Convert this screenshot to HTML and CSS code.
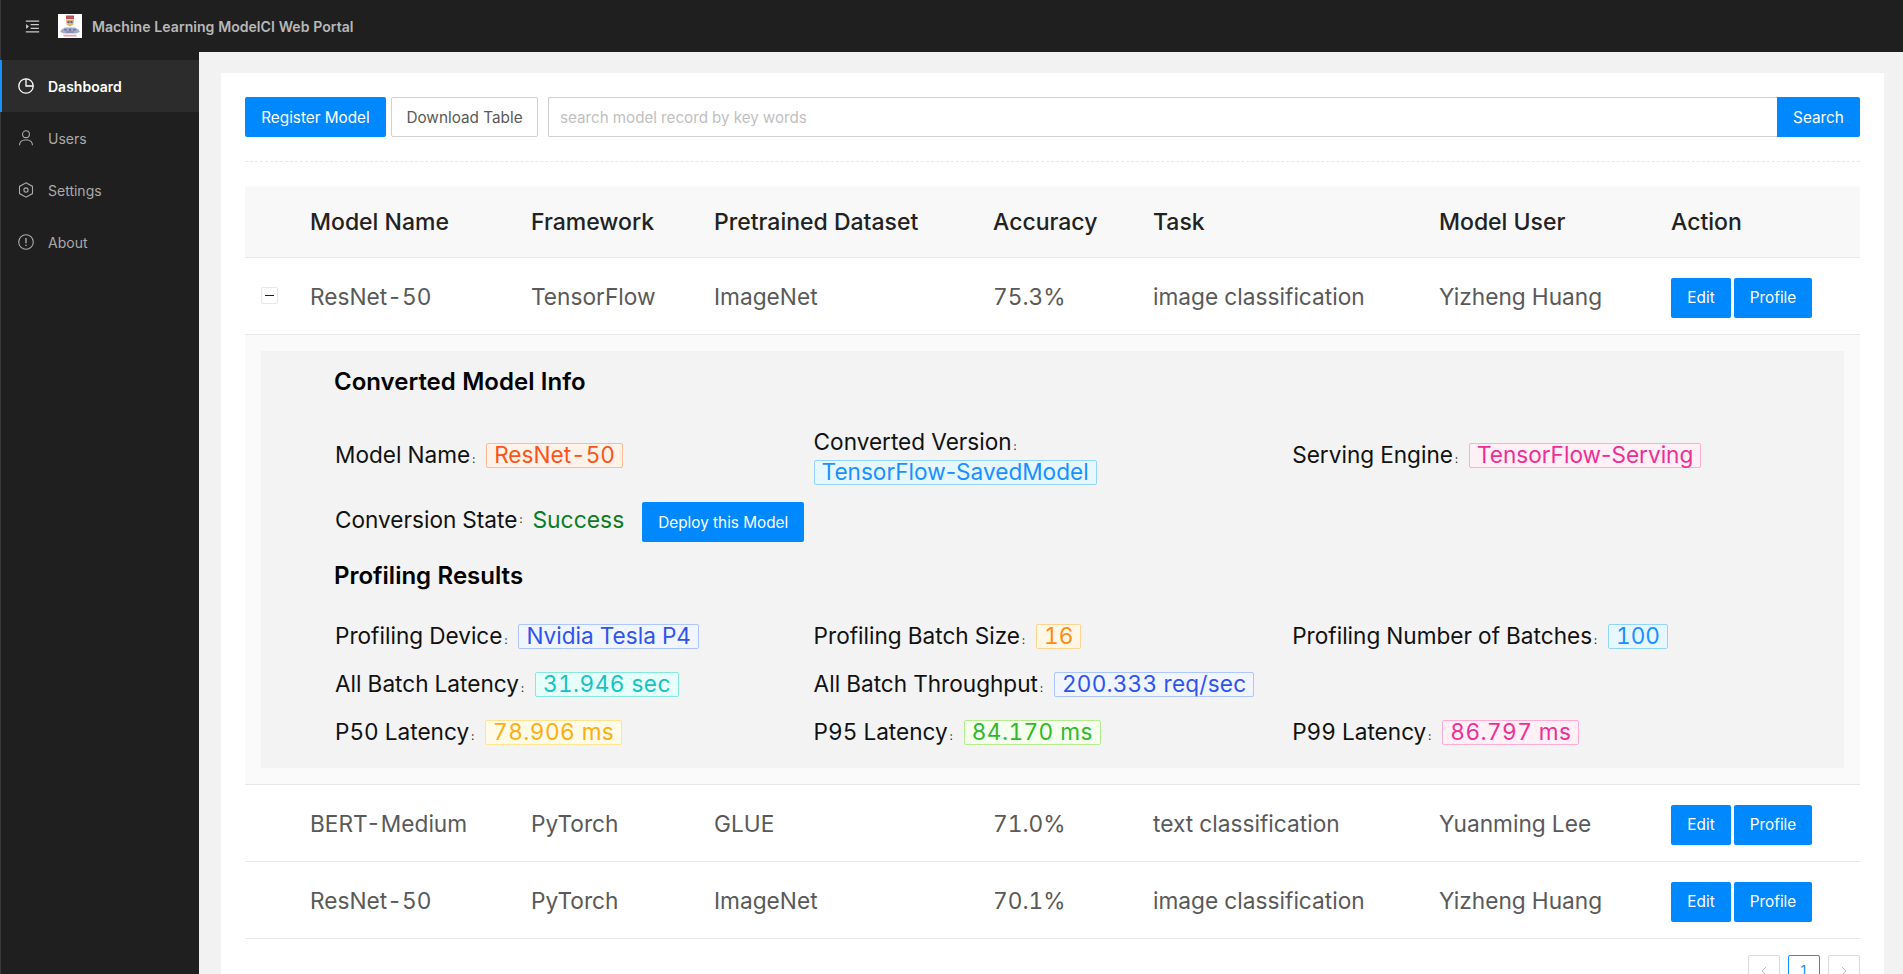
FILE: index.html
```html
<!DOCTYPE html>
<html lang="en">
<head>
<meta charset="utf-8">
<title>Machine Learning ModelCI Web Portal</title>
<link rel="stylesheet" href="styles.css">
</head>
<body>
<header class="topbar">
  <svg class="fold-icon" viewBox="64 64 896 896" fill="currentColor"><path d="M408 442h480c4.4 0 8-3.6 8-8v-56c0-4.4-3.6-8-8-8H408c-4.4 0-8 3.6-8 8v56c0 4.4 3.6 8 8 8zm-8 204c0 4.4 3.6 8 8 8h480c4.4 0 8-3.6 8-8v-56c0-4.4-3.6-8-8-8H408c-4.4 0-8 3.6-8 8v56zm504-486H120c-4.4 0-8 3.6-8 8v56c0 4.4 3.6 8 8 8h784c4.4 0 8-3.6 8-8v-56c0-4.4-3.6-8-8-8zm0 632H120c-4.4 0-8 3.6-8 8v56c0 4.4 3.6 8 8 8h784c4.4 0 8-3.6 8-8v-56c0-4.4-3.6-8-8-8zM142.4 642.1L298.7 519a8.84 8.84 0 0 0 0-13.9L142.4 381.9c-5.8-4.6-14.4-.5-14.4 6.9v246.3a8.9 8.9 0 0 0 14.4 7z"/></svg>
  <svg class="logo" viewBox="0 0 24 24">
    <rect width="24" height="24" fill="#fff"/>
    <rect x="8" y="1.5" width="8" height="3.5" fill="#c2505c"/>
    <path d="M8 5.5h8l-.5 5-3.5 2-3.5-2z" fill="#d9b878"/>
    <path d="M9.5 7h2v2h-2zM12.5 7h2v2h-2z" fill="#5a5f8a"/>
    <path d="M3 16l4-2.5h10l4 2.5 .8 2-3.8 1.5H6L2.2 18z" fill="#a3aaca"/>
    <path d="M6 15h3v1.5H6zM11 14.5h2V17h-2zM15 15h3v1.5h-3zM8 17.5h8v1H8z" fill="#6d76a6"/>
    <rect x="5.5" y="20.8" width="13" height="1.7" fill="#ec9aa8"/>
  </svg>
  <span class="app-title">Machine Learning ModelCI Web Portal</span>
</header>
<div class="shell">
  <nav class="sidebar">
    <a class="nav-item active">
      <svg class="nav-icon" viewBox="0 0 16 16" fill="none" stroke="currentColor" stroke-width="1.3"><circle cx="8" cy="8" r="7.2"/><path d="M8 .8V8h7.2"/></svg>
      <span>Dashboard</span>
    </a>
    <a class="nav-item">
      <svg class="nav-icon" viewBox="0 0 16 16" fill="none" stroke="currentColor" stroke-width="1.1"><circle cx="8" cy="4.2" r="3.4"/><path d="M1.5 15.2c0-3.2 2.5-5.2 5-5.2h3c2.5 0 5 2 5 5.2"/></svg>
      <span>Users</span>
    </a>
    <a class="nav-item">
      <svg class="nav-icon" viewBox="0 0 16 16" fill="none" stroke="currentColor" stroke-width="1.1"><path d="M8 .8l6.5 3.6v7.2L8 15.2l-6.5-3.6V4.4z"/><circle cx="8" cy="8" r="2.1"/></svg>
      <span>Settings</span>
    </a>
    <a class="nav-item">
      <svg class="nav-icon" viewBox="0 0 16 16" fill="none" stroke="currentColor" stroke-width="1.1"><circle cx="8" cy="8" r="7.3"/><path d="M8 4v5.2" stroke-width="1.4"/><path d="M8 10.8v1.3" stroke-width="1.4"/></svg>
      <span>About</span>
    </a>
  </nav>
  <main class="content">
    <section class="card">
      <div class="toolbar">
        <button class="btn primary register">Register Model</button>
        <button class="btn default download">Download Table</button>
        <div class="search">
          <input class="search-input" type="text" placeholder="search model record by key words">
          <button class="btn primary search-btn">Search</button>
        </div>
      </div>
      <div class="dashed"></div>
      <table class="models">
        <colgroup>
          <col class="c-exp"><col class="c-name"><col class="c-fw"><col class="c-ds"><col class="c-acc"><col class="c-task"><col class="c-user"><col class="c-act">
        </colgroup>
        <thead>
          <tr><th></th><th>Model Name</th><th>Framework</th><th>Pretrained Dataset</th><th>Accuracy</th><th>Task</th><th>Model User</th><th>Action</th></tr>
        </thead>
        <tbody>
          <tr>
            <td class="exp-cell"><span class="expander"></span></td>
            <td>ResNet-50</td><td>TensorFlow</td><td>ImageNet</td><td>75.3%</td><td>image classification</td><td>Yizheng Huang</td>
            <td class="actions"><button class="btn primary edit">Edit</button><button class="btn primary profile">Profile</button></td>
          </tr>
          <tr class="expanded">
            <td colspan="8">
              <div class="panel">
                <h3 class="panel-title">Converted Model Info</h3>
                <div class="desc desc-top">
                  <div class="item lift"><span class="label">Model Name</span><i class="colon">:</i><span class="tag volcano">ResNet-50</span></div>
                  <div class="item"><span class="label">Converted Version</span><i class="colon">:</i><br><span class="tag blue prop">TensorFlow-SavedModel</span></div>
                  <div class="item lift"><span class="label">Serving Engine</span><i class="colon">:</i><span class="tag magenta prop">TensorFlow-Serving</span></div>
                </div>
                <div class="state">
                  <span class="label">Conversion State</span><i class="colon">:</i><span class="success">Success</span>
                  <button class="btn primary deploy">Deploy this Model</button>
                </div>
                <h3 class="panel-title second">Profiling Results</h3>
                <div class="desc desc-results">
                  <div class="item"><span class="label">Profiling Device</span><i class="colon">:</i><span class="tag geekblue">Nvidia Tesla P4</span></div>
                  <div class="item"><span class="label">Profiling Batch Size</span><i class="colon">:</i><span class="tag orange">16</span></div>
                  <div class="item"><span class="label">Profiling Number of Batches</span><i class="colon">:</i><span class="tag blue">100</span></div>
                  <div class="item"><span class="label">All Batch Latency</span><i class="colon">:</i><span class="tag cyan unit">31.946 sec</span></div>
                  <div class="item"><span class="label">All Batch Throughput</span><i class="colon">:</i><span class="tag geekblue unit-long">200.333 req/sec</span></div>
                  <div class="item"></div>
                  <div class="item"><span class="label">P50 Latency</span><i class="colon">:</i><span class="tag gold unit">78.906 ms</span></div>
                  <div class="item"><span class="label">P95 Latency</span><i class="colon">:</i><span class="tag green unit">84.170 ms</span></div>
                  <div class="item"><span class="label">P99 Latency</span><i class="colon">:</i><span class="tag magenta unit">86.797 ms</span></div>
                </div>
              </div>
            </td>
          </tr>
          <tr>
            <td></td><td>BERT-Medium</td><td>PyTorch</td><td>GLUE</td><td>71.0%</td><td>text classification</td><td>Yuanming Lee</td>
            <td class="actions"><button class="btn primary edit">Edit</button><button class="btn primary profile">Profile</button></td>
          </tr>
          <tr>
            <td></td><td>ResNet-50</td><td>PyTorch</td><td>ImageNet</td><td>70.1%</td><td>image classification</td><td>Yizheng Huang</td>
            <td class="actions"><button class="btn primary edit">Edit</button><button class="btn primary profile">Profile</button></td>
          </tr>
        </tbody>
      </table>
      <div class="pager">
        <a class="page-btn"><svg class="chev" viewBox="0 0 10 10" fill="none" stroke="currentColor"><path d="M7 1L3 5l4 4"/></svg></a>
        <a class="page-btn current">1</a>
        <a class="page-btn"><svg class="chev" viewBox="0 0 10 10" fill="none" stroke="currentColor"><path d="M3 1l4 4-4 4"/></svg></a>
      </div>
    </section>
  </main>
</div>
</body>
</html>
```
FILE: styles.css
```css
* { box-sizing: border-box; }
html, body { margin: 0; height: 100%; overflow: hidden; }
body { font-family: Inter, "Liberation Sans", sans-serif; background: #f2f2f2; color: #222; display: flex; flex-direction: column; height: 974px; font-variant-numeric: tabular-nums; }

.topbar { height: 52px; flex: none; background: #1f1f1f; display: flex; align-items: center; padding-left: 24px; border-left: 1px solid #3a3a3a; }
.fold-icon { width: 15px; height: 15px; color: #ccc; margin-right: 18px; }
.logo { width: 24px; height: 24px; margin-right: 10px; }
.app-title { color: #b8b8b8; font-size: 14.1px; font-weight: 600; }

.shell { flex: 1; display: flex; min-height: 0; }
.sidebar { width: 199px; flex: none; background: #1f1f1f; padding-top: 8px; border-left: 1px solid #3a3a3a; }
.nav-item { height: 52px; display: flex; align-items: center; padding-left: 17px; color: #aaa; font-size: 14px; gap: 14px; margin-left: -1px; border-left: 1px solid #3a3a3a; }
.nav-item.active { background: #2c2c2c; color: #fff; font-weight: 600; border-left: 2px solid #1890ff; padding-left: 16px; }
.nav-icon { width: 16px; height: 16px; flex: none; }

.content { flex: 1; padding: 21px 19px 0 22px; min-width: 0; }
.card { background: #fff; padding: 24px 24px 0; height: 100%; }

.btn { font-family: inherit; font-size: 15.3px; height: 40px; border-radius: 2px; border: 1px solid transparent; padding: 0; cursor: pointer; }
.btn.primary { background: #0088ff; color: #fff; }
.btn.default { background: #fff; color: #595959; border-color: #d0d0d0; }

.toolbar { display: flex; }
.register { width: 141px; margin-right: 5px; }
.download { width: 147px; margin-right: 10px; }
.search { flex: 1; display: flex; }
.search-input { flex: 1; height: 40px; border: 1px solid #d0d0d0; border-right: 0; font: inherit; font-size: 15.2px; padding: 0 11px; border-radius: 2px 0 0 2px; min-width: 0; }
.search-input::placeholder { color: #bfbfbf; }
.search-btn { width: 83px; border-radius: 0 2px 2px 0; }
.dashed { border-top: 1px dashed #e8e8e8; margin: 24px 0; }

.models { width: 1615px; table-layout: fixed; border-collapse: collapse; font-size: 22.7px; }
.c-exp { width: 49px; } .c-name { width: 221px; } .c-fw { width: 183px; } .c-ds { width: 279px; }
.c-acc { width: 160px; } .c-task { width: 286px; } .c-user { width: 232px; } .c-act { width: 205px; }
.models th { background: #f8f8f8; height: 71px; text-align: left; font-weight: 500; font-size: 23px; color: #222; padding: 2px 16px 0; border-bottom: 1px solid #e8e8e8; }
.models td { height: 77px; padding: 2px 16px 0; color: #595959; border-bottom: 1px solid #e8e8e8; white-space: nowrap; }
.exp-cell { text-align: center; }
.expander { display: block; width: 17px; height: 17px; margin-top: -2px; border: 1px solid #e8e8e8; border-radius: 2px; position: relative; }
.expander::after { content: ""; position: absolute; left: 3px; right: 3px; top: 7px; height: 1px; background: #222; }
.actions .btn { vertical-align: middle; margin-top: 2px; }
.edit { width: 60px; margin-right: 3px; }
.profile { width: 78px; }

.models .expanded td { padding: 16px; background: #fafafa; height: auto; white-space: normal; }
.panel { background: #f3f3f3; padding: 14px 0 0 73px; height: 417px; color: #111; font-size: 22.6px; }
.panel-title { margin: 0; font-size: 24px; line-height: 34px; font-weight: 600; color: #000; }
.desc { display: grid; grid-template-columns: repeat(3, 478.6px); align-items: center; padding-left: 1px; }
.desc-top { grid-auto-rows: 60px; margin-top: 28px; }
.desc-results { grid-auto-rows: 48px; margin-top: 19px; }
.item { line-height: 30px; }
.lift { margin-bottom: 4px; }
.label { color: #111; }
.colon { font-style: normal; font-size: 11px; line-height: 1; margin: 0 11px 0 2px; color: #111; }
.tag { display: inline-block; height: 25px; line-height: 22px; padding: 0 7px; border: 1px solid; border-radius: 2px; vertical-align: baseline; }
.prop { font-variant-numeric: normal; font-feature-settings: "tnum" 0; }
.unit { letter-spacing: .45px; }
.unit-long { letter-spacing: .2px; }
.volcano { color: #fa541c; background: #fff2e8; border-color: #ffbb96; }
.blue { color: #1890ff; background: #e6f7ff; border-color: #91d5ff; }
.magenta { color: #eb2f96; background: #fff0f6; border-color: #ffadd2; }
.geekblue { color: #2f54eb; background: #f0f5ff; border-color: #adc6ff; }
.orange { color: #fa8c16; background: #fff7e6; border-color: #ffd591; }
.cyan { color: #13c2c2; background: #e6fffb; border-color: #87e8de; }
.gold { color: #faad14; background: #fffbe6; border-color: #ffe58f; }
.green { color: #2eb82e; background: #f6ffed; border-color: #b7eb8f; }

.state { display: flex; align-items: center; height: 60px; margin-top: 3px; padding-left: 1px; }
.success { color: #0a7d24; font-size: 22.9px; margin-left: -1px; }
.deploy { width: 162px; margin: 5px 0 0 18px; }
.second { margin-top: 9px; }

.pager { display: flex; justify-content: flex-end; gap: 8px; margin-top: 16px; }
.page-btn { width: 32px; height: 32px; border: 1px solid #d9d9d9; border-radius: 2px; display: flex; align-items: center; justify-content: center; font-size: 14px; color: #bbb; background: #fff; }
.page-btn.current { border-color: #1890ff; color: #1890ff; }
.chev { width: 10px; height: 10px; }
```
